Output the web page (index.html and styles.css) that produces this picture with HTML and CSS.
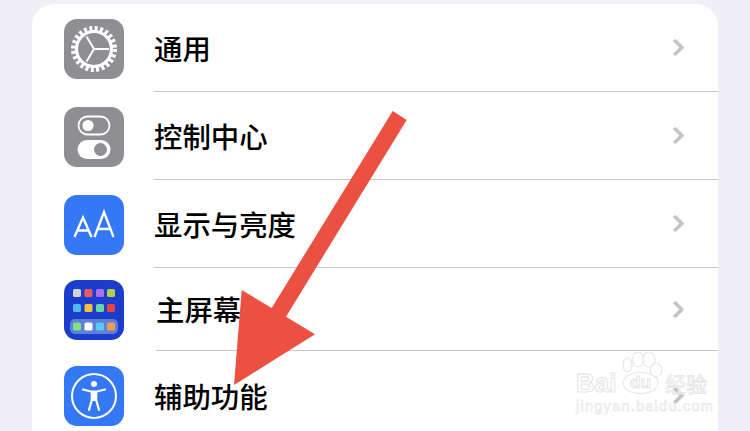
FILE: index.html
```html
<!DOCTYPE html>
<html>
<head>
  <title>设置</title>
  <link rel="stylesheet" href="styles.css">
</head>
<body>
  <div class="card">
    <!-- General -->
    <div class="row">
      <div class="icon icon-gray">
        <svg width="60" height="60" viewBox="0 0 60 60">
          <circle cx="30" cy="30" r="20.5" fill="none" stroke="#fff" stroke-width="5" stroke-dasharray="3 2.37"/>
          <circle cx="30" cy="30" r="17.5" fill="none" stroke="#fff" stroke-width="3.2"/>
          <path d="M30 30 L22.5 17.5 M30 30 H45 M30 30 L22.5 42.5" fill="none" stroke="#fff" stroke-width="2"/>
        </svg>
      </div>
      <div class="rowBody">
        <span class="label">通用</span>
        <span class="chevron"></span>
      </div>
    </div>

    <!-- Control centre -->
    <div class="row">
      <div class="icon icon-gray">
        <svg width="60" height="60" viewBox="0 0 60 60">
          <rect x="14.5" y="9.5" width="31" height="18" rx="9" fill="none" stroke="#fff" stroke-width="1.8"/>
          <circle cx="24" cy="18.5" r="5.6" fill="#fff"/>
          <rect x="13.5" y="33" width="33" height="19" rx="9.5" fill="#fff"/>
          <circle cx="36.5" cy="42.5" r="6.5" fill="#8e8e93"/>
        </svg>
      </div>
      <div class="rowBody">
        <span class="label">控制中心</span>
        <span class="chevron"></span>
      </div>
    </div>

    <!-- Display -->
    <div class="row">
      <div class="icon icon-blue">
        <svg width="60" height="60" viewBox="0 0 60 60">
          <path d="M10.5 42 L19 22.5 L27.5 42 M13.5 35.5 H24.5" fill="none" stroke="#fff" stroke-width="2.3"/>
          <path d="M30.5 42 L40 17 L49.5 42 M33.6 34 H46.4" fill="none" stroke="#fff" stroke-width="2.3"/>
        </svg>
      </div>
      <div class="rowBody">
        <span class="label">显示与亮度</span>
        <span class="chevron"></span>
      </div>
    </div>

    <!-- Home screen -->
    <div class="row row-short">
      <div class="icon icon-home">
        <svg width="60" height="60" viewBox="0 0 60 60">
          <rect x="9" y="9" width="8" height="8" rx="1.6" fill="#d3d3d0"/>
          <rect x="20.5" y="9" width="8" height="8" rx="1.6" fill="#ea5a64"/>
          <rect x="32" y="9" width="8" height="8" rx="1.6" fill="#ad6ff0"/>
          <rect x="43" y="9" width="8" height="8" rx="1.6" fill="#b5d04a"/>
          <rect x="9" y="24" width="8" height="8" rx="1.6" fill="#4fb8f2"/>
          <rect x="20.5" y="24" width="8" height="8" rx="1.6" fill="#f6c23c"/>
          <rect x="32" y="24" width="8" height="8" rx="1.6" fill="#63d6a4"/>
          <rect x="43" y="24" width="8" height="8" rx="1.6" fill="#e8443c"/>
          <rect x="6" y="39" width="48" height="15" rx="5" fill="#5f7fd8"/>
          <rect x="9" y="42.5" width="8" height="8" rx="1.6" fill="#7fe37a"/>
          <rect x="20.5" y="42.5" width="8" height="8" rx="1.6" fill="#fff"/>
          <rect x="32" y="42.5" width="8" height="8" rx="1.6" fill="#5cc8fa"/>
          <rect x="43" y="42.5" width="8" height="8" rx="1.6" fill="#f09d50"/>
        </svg>
      </div>
      <div class="rowBody rowBody-home">
        <span class="label">主屏幕</span>
        <span class="chevron"></span>
      </div>
    </div>

    <!-- Accessibility -->
    <div class="row row-last">
      <div class="icon icon-blue">
        <svg width="60" height="60" viewBox="0 0 60 60">
          <circle cx="30" cy="30" r="22" fill="none" stroke="#fff" stroke-width="2"/>
          <circle cx="30" cy="18" r="3" fill="#fff"/>
          <path d="M19 23.5 L27 25.5 H33 L41 23.5 M27.8 26 V34 L25 44 M32.2 26 V34 L35 44" fill="none" stroke="#fff" stroke-width="2.2" stroke-linecap="round" stroke-linejoin="round"/>
          <path d="M27.5 26 H32.5 V35 H27.5 Z" fill="#fff"/>
        </svg>
      </div>
      <div class="rowBody">
        <span class="label">辅助功能</span>
        <span class="chevron"></span>
      </div>
    </div>
  </div>

  <!-- Arrow drawn over the list -->
  <svg class="arrow" width="750" height="431" viewBox="0 0 750 431">
    <polygon fill="#ec5040" points="392.7,111 406.7,120 286,316.7 315,334.3 234,385 241.7,290 271.7,308"/>
  </svg>

  <!-- Watermark -->
  <div class="watermark">
    <svg class="paw" width="46" height="46" viewBox="0 0 46 46">
      <g fill="none" stroke="#e8e8e8" stroke-width="1.2">
        <ellipse cx="7.5" cy="15" rx="4.5" ry="7"/>
        <ellipse cx="18" cy="9.5" rx="5.5" ry="7.5"/>
        <ellipse cx="29" cy="9.5" rx="6" ry="7.5"/>
        <ellipse cx="36" cy="20" rx="6" ry="7"/>
        <ellipse cx="20.5" cy="33" rx="17.5" ry="10.5"/>
      </g>
    </svg>
    <div class="wmTop">
      <span class="wmBai">Bai</span>
      <span class="wmDu">du</span>
      <span class="wmJy">经验</span>
    </div>
    <div class="wmUrl">jingyan.baidu.com</div>
  </div>
</body>
</html>
```

FILE: styles.css
```css
html, body {
  height: 431px;
  overflow: hidden;
}

body {
  margin: 0;
  padding: 4px 32px 0;
  box-sizing: border-box;
  background-color: #efeff5;
  font-family: "Liberation Sans", "Noto Sans CJK SC", sans-serif;
}

.card {
  background-color: white;
  border-radius: 22px 22px 0 0;
  height: 427px;
}

.row {
  display: flex;
  height: 88px;
  padding-left: 32px;
}

.row-short {
  height: 83px;
}

.row-last {
  height: 80px;
}

.icon {
  flex: none;
  width: 60px;
  height: 60px;
  margin-top: 15px;
  margin-right: 30px;
  border-radius: 13px;
}

.row-short .icon {
  margin-top: 12px;
}

.icon svg {
  display: block;
}

.icon-gray {
  background-color: #8e8e93;
}

.icon-blue {
  background-color: #3478f6;
}

.icon-home {
  background-color: #1c3ccb;
}

.rowBody {
  flex: 1;
  display: flex;
  align-items: center;
  justify-content: space-between;
  border-bottom: 1px solid #c6c6c8;
  padding-right: 34px;
}

.row-last .rowBody {
  border-bottom: none;
  height: 89px;
}

.rowBody-home {
  margin-left: 2px;
}

.label {
  font-family: "Noto Sans CJK SC", sans-serif;
  font-size: 28.4px;
  font-weight: 500;
  line-height: 40px;
  color: #000;
}

.chevron {
  width: 13px;
  height: 13px;
  margin-right: 2.5px;
  border-top: 4.5px solid #c4c4c7;
  border-right: 4.5px solid #c4c4c7;
  border-radius: 2px;
  box-sizing: border-box;
  transform: rotate(45deg);
}

.arrow {
  position: absolute;
  top: 0;
  left: 0;
}

/* watermark sits on top of the last row */
.watermark {
  position: absolute;
  left: 575px;
  top: 348px;
  width: 136px;
  height: 70px;
}

.paw {
  position: absolute;
  left: 45px;
  top: 2px;
}

.wmTop {
  position: absolute;
  left: 1px;
  top: 22px;
  display: flex;
  align-items: center;
  white-space: nowrap;
  height: 26px;
}

.wmBai, .wmDu {
  font-family: "Liberation Sans", sans-serif;
  font-weight: bold;
  color: rgba(255, 255, 255, 0.75);
  -webkit-text-stroke: 1px #e4e4e4;
}

.wmBai {
  font-size: 26px;
  line-height: 26px;
  width: 47px;
}

.wmDu {
  font-size: 17px;
  line-height: 26px;
  width: 35px;
  text-align: center;
}

.wmJy {
  font-family: "Noto Sans CJK SC", sans-serif;
  font-size: 21px;
  line-height: 26px;
  margin-left: 7px;
  color: rgba(255, 255, 255, 0.7);
  -webkit-text-stroke: 0.8px #e4e4e4;
}

.wmUrl {
  position: absolute;
  left: 1px;
  top: 50px;
  font-family: "Liberation Sans", sans-serif;
  font-size: 14.5px;
  line-height: 16px;
  letter-spacing: 1.25px;
  white-space: nowrap;
  color: rgba(255, 255, 255, 0.7);
  -webkit-text-stroke: 0.6px #e4e4e4;
}
```
